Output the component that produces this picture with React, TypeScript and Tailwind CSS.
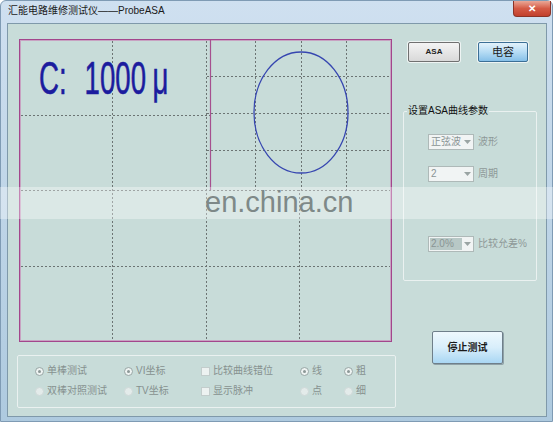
import React from "react";

const FONT = { fontFamily: '"Liberation Sans", "Noto Sans CJK SC", sans-serif' };

function Plot() {
  const dash = { stroke: "#6c7473", strokeWidth: 1, strokeDasharray: "2 2" };
  const mag = "#a64f8f";
  return (
    <div className="relative w-[373px] h-[303px] bg-[#c8dcd9] border border-[#a3468c] shadow-[inset_0_0_0_1px_#c8a2c2]">
      <svg width="371" height="301" className="block">
        <g transform="translate(-1,-1)">
          {[93.5, 187.5, 280.5].map((x) => (
            <line key={"v" + x} x1={x} y1={2} x2={x} y2={301} {...dash} />
          ))}
          {[76.5, 151.5, 227.5].map((y) => (
            <line key={"h" + y} x1={2} y1={y} x2={371} y2={y} {...dash} />
          ))}
          <rect x={191} y={2} width={180} height={149} fill="#c8dcd9" />
          {[236.5, 282.5, 327.5].map((x) => (
            <line key={"sv" + x} x1={x} y1={2} x2={x} y2={151} {...dash} />
          ))}
          {[37.5, 74.5, 111.5].map((y) => (
            <line key={"sh" + y} x1={188} y1={y} x2={371} y2={y} {...dash} />
          ))}
          <line x1={191.5} y1={0} x2={191.5} y2={151} stroke={mag} strokeWidth={1.2} />
          <ellipse cx={282} cy={73.5} rx={47} ry={60.5} fill="none" stroke="#3646b0" strokeWidth={1.3} />
        </g>
      </svg>
      <div className="absolute left-[19px] top-[15px] origin-left scale-x-[0.6] whitespace-nowrap text-[46px] leading-none text-[#1c1c9e] flex"
        style={{ fontFamily: '"Liberation Sans", sans-serif', WebkitTextStroke: "0.6px #1c1c9e" }}>
        <span>C:</span>
        <span className="ml-[30px]">1000</span>
        <span className="ml-[11px]">μ</span>
      </div>
    </div>
  );
}

function Radio({ checked, label }: { checked?: boolean; label: string }) {
  return (
    <div className="flex items-center h-[14px] gap-[3px]">
      {checked ? (
        <span className="w-[9px] h-[9px] rounded-full border border-[#98a6a5] bg-[#eef3f2] flex items-center justify-center">
          <span className="w-[3px] h-[3px] rounded-full bg-[#8c9897]" />
        </span>
      ) : (
        <span className="w-[9px] h-[9px] rounded-full border border-[#cfd9d8] bg-[#e3ebea]" />
      )}
      <span className="text-[10px] leading-none text-[#86918f] whitespace-nowrap">{label}</span>
    </div>
  );
}

function Check({ label }: { label: string }) {
  return (
    <div className="flex items-center h-[14px] gap-[3px]">
      <span className="w-[9px] h-[9px] border border-[#c3cdcc] bg-[#edf2f1]" />
      <span className="text-[10px] leading-none text-[#86918f] whitespace-nowrap">{label}</span>
    </div>
  );
}

function Combo({ text, label, hl }: { text: string; label: string; hl?: boolean }) {
  return (
    <div className="flex items-center gap-[4px]">
      <div className="w-[46px] h-[16px] border border-[#aeb9b8] bg-[#f1f4f4] flex items-center">
        <div className={"h-[12px] ml-[1px] w-[32px] flex items-center pl-[1px] whitespace-nowrap text-[10px] leading-none text-[#8a9594] " + (hl ? "bg-[#b8c8c6]" : "")}>
          {text}
        </div>
        <div className="flex-1 flex items-center justify-center">
          <svg width="7" height="4" viewBox="0 0 7 4">
            <path d="M0 0 L7 0 L3.5 4 Z" fill="#9aa4a3" />
          </svg>
        </div>
      </div>
      <span className="text-[10px] leading-none text-[#8e9998] whitespace-nowrap">{label}</span>
    </div>
  );
}

export default function App() {
  return (
    <div className="relative w-[558px] h-[427px] bg-white overflow-hidden" style={FONT}>
      <div className="w-[553px] h-[422px] flex flex-col rounded-t-[6px] border border-[#7f9bb4] bg-gradient-to-b from-[#cfe0f0] to-[#aecadf]">
        <div className="h-[22px] flex justify-between items-start">
          <div className="pl-[7px] pt-[5px] text-[10px] leading-none text-[#1b1b1b]">汇能电路维修测试仪——ProbeASA</div>
          <div className="mr-[1px] w-[38px] h-[16px] rounded-b-[4px] border border-t-0 border-[#8b3326] bg-gradient-to-b from-[#e9a797] via-[#d45a45] to-[#c2402c] flex items-center justify-center text-white text-[10px] font-bold leading-none">
            ✕
          </div>
        </div>
        <div className="flex-1 ml-[6px] mr-[5px] mb-[4px] border border-[#7f99aa] bg-[#c8dcd9] flex">
          <div className="pl-[9px] pt-[15px] flex flex-col">
            <div className="ml-[2px]">
              <Plot />
            </div>
            <div className="mt-[13px] w-[379px] h-[53px] border border-[#eaf1f0] rounded-[2px] flex pl-[17px] pt-[8px]">
              <div className="w-[89px] flex flex-col gap-[6px]">
                <Radio checked label="单棒测试" />
                <Radio label="双棒对照测试" />
              </div>
              <div className="w-[77px] flex flex-col gap-[6px]">
                <Radio checked label="VI坐标" />
                <Radio label="TV坐标" />
              </div>
              <div className="w-[99px] flex flex-col gap-[6px]">
                <Check label="比较曲线错位" />
                <Check label="显示脉冲" />
              </div>
              <div className="w-[44px] flex flex-col gap-[6px]">
                <Radio checked label="线" />
                <Radio label="点" />
              </div>
              <div className="flex flex-col gap-[6px]">
                <Radio checked label="粗" />
                <Radio label="细" />
              </div>
            </div>
          </div>
          <div className="ml-[7px] pt-[18px] w-[134px] flex flex-col">
            <div className="flex pl-[5px] gap-[18px]">
              <div className="w-[52px] h-[20px] border border-[#707070] rounded-[2px] bg-gradient-to-b from-[#f4f4f4] to-[#d9d9d9] shadow-[0_0_0_1px_#eef4f3] flex items-center justify-center text-[8px] font-bold leading-none text-[#222]">
                ASA
              </div>
              <div className="w-[50px] h-[20px] border border-[#3c6f96] rounded-[2px] bg-gradient-to-b from-[#e3f2fb] via-[#b6dcf4] to-[#86c0e8] shadow-[0_0_0_1px_#eef4f3] flex items-center justify-center text-[11px] leading-none text-[#1a1a1a]">
                电容
              </div>
            </div>
            <div className="relative mt-[49px] h-[170px] border border-[#eaf1f0] rounded-[2px] pl-[24px] pt-[22px] flex flex-col">
              <div className="absolute left-[3px] top-[-6px] px-[1px] bg-[#c8dcd9] text-[10px] leading-none text-[#111] whitespace-nowrap">设置ASA曲线参数</div>
              <Combo text="正弦波" label="波形" />
              <div className="mt-[16px]">
                <Combo text="2" label="周期" />
              </div>
              <div className="mt-[54px]">
                <Combo text="2.0%" label="比较允差%" hl />
              </div>
            </div>
            <div className="mt-[50px] ml-[29px] w-[71px] h-[33px] border border-[#6f7f8a] rounded-[2px] bg-gradient-to-b from-[#eef8fd] via-[#d8eefb] to-[#a9d7f3] shadow-[1px_1px_0_#8fa2a8] flex items-center justify-center text-[10px] font-bold leading-none text-[#1a1a1a]">
              停止测试
            </div>
          </div>
        </div>
      </div>
      <div className="absolute left-0 top-[187px] w-[558px] h-[32px] bg-white/35 pl-[205px] pt-[1px]">
        <span className="text-[29px] leading-none text-[#7e8988]" style={{ fontFamily: '"Liberation Sans", sans-serif' }}>
          en.china.cn
        </span>
      </div>
    </div>
  );
}
